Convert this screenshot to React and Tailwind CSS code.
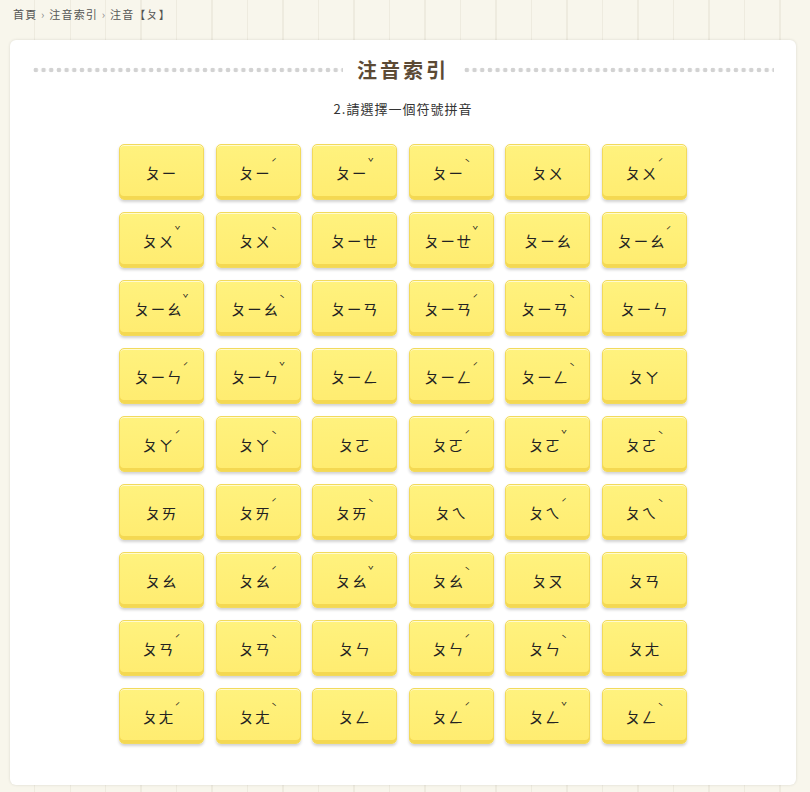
import React from "react"

// 注音【ㄆ】 syllable list, row by row (6 per row)
const rows = [
  ["ㄆㄧ", ""], ["ㄆㄧ", "ˊ"], ["ㄆㄧ", "ˇ"], ["ㄆㄧ", "ˋ"], ["ㄆㄨ", ""], ["ㄆㄨ", "ˊ"],
  ["ㄆㄨ", "ˇ"], ["ㄆㄨ", "ˋ"], ["ㄆㄧㄝ", ""], ["ㄆㄧㄝ", "ˇ"], ["ㄆㄧㄠ", ""], ["ㄆㄧㄠ", "ˊ"],
  ["ㄆㄧㄠ", "ˇ"], ["ㄆㄧㄠ", "ˋ"], ["ㄆㄧㄢ", ""], ["ㄆㄧㄢ", "ˊ"], ["ㄆㄧㄢ", "ˋ"], ["ㄆㄧㄣ", ""],
  ["ㄆㄧㄣ", "ˊ"], ["ㄆㄧㄣ", "ˇ"], ["ㄆㄧㄥ", ""], ["ㄆㄧㄥ", "ˊ"], ["ㄆㄧㄥ", "ˋ"], ["ㄆㄚ", ""],
  ["ㄆㄚ", "ˊ"], ["ㄆㄚ", "ˋ"], ["ㄆㄛ", ""], ["ㄆㄛ", "ˊ"], ["ㄆㄛ", "ˇ"], ["ㄆㄛ", "ˋ"],
  ["ㄆㄞ", ""], ["ㄆㄞ", "ˊ"], ["ㄆㄞ", "ˋ"], ["ㄆㄟ", ""], ["ㄆㄟ", "ˊ"], ["ㄆㄟ", "ˋ"],
  ["ㄆㄠ", ""], ["ㄆㄠ", "ˊ"], ["ㄆㄠ", "ˇ"], ["ㄆㄠ", "ˋ"], ["ㄆㄡ", ""], ["ㄆㄢ", ""],
  ["ㄆㄢ", "ˊ"], ["ㄆㄢ", "ˋ"], ["ㄆㄣ", ""], ["ㄆㄣ", "ˊ"], ["ㄆㄣ", "ˋ"], ["ㄆㄤ", ""],
  ["ㄆㄤ", "ˊ"], ["ㄆㄤ", "ˋ"], ["ㄆㄥ", ""], ["ㄆㄥ", "ˊ"], ["ㄆㄥ", "ˇ"], ["ㄆㄥ", "ˋ"],
]

const cjk = "font-['Noto_Sans_CJK_TC','Noto_Sans_CJK_SC',sans-serif]"

function Dots() {
  return (
    <div className="flex-1 h-[8px] bg-[radial-gradient(circle,#d2d2d2_2px,transparent_2.6px)] bg-[length:7.7px_8px] bg-repeat-x" />
  )
}

function Key({ body, tone }) {
  return (
    <a
      href="#"
      className="h-[56px] rounded-[5px] border border-[#f2da5c] bg-[linear-gradient(#fff27e,#ffec70)] shadow-[inset_0_1px_0_#fffbd0,inset_0_-3px_0_#f4d852,0_2px_3px_rgba(0,0,0,0.18)] flex items-center justify-center text-[#222]"
    >
      <span className="flex items-start whitespace-nowrap">
        <span className="text-[15px] leading-[15px] tracking-[1px]">{body}</span>
        {tone && (
          <span className="-mt-[7px] text-[10px] leading-[10px] w-[6px]">{tone}</span>
        )}
      </span>
    </a>
  )
}

export default function App() {
  return (
    <div
      className={`min-h-[792px] w-[810px] bg-[#f8f6ec] bg-[repeating-linear-gradient(90deg,transparent_0px,transparent_34px,#eeebdf_34px,#eeebdf_35.5px)] ${cjk} pb-[7px]`}
    >
      {/* breadcrumb */}
      <div className="h-[40px] pl-[13px] pt-[7px] text-[11px] text-[#555] leading-[14px] tracking-[1.2px]">
        首頁 <span className="text-[#888]">›</span> 注音索引 <span className="text-[#888]">›</span> 注音【ㄆ】
      </div>

      {/* main card */}
      <div className="ml-[10px] w-[786px] h-[745px] rounded-[6px] bg-white shadow-[0_0_3px_rgba(0,0,0,0.12)] px-[22px] pt-[16px]">
        <div className="flex items-center gap-[14px]">
          <Dots />
          <h1 className="text-[20px] font-bold text-[#5c4a35] tracking-[3px] leading-[28px]">注音索引</h1>
          <Dots />
        </div>
        <p className="mt-[16px] text-center text-[13px] text-[#333] tracking-[1px] leading-[18px]">2.請選擇一個符號拼音</p>

        <div className="mt-[26px] mx-auto w-[568px] grid grid-cols-6 gap-x-[11.6px] gap-y-[12px]">
          {rows.map(([b, t], i) => (
            <Key key={i} body={b} tone={t} />
          ))}
        </div>
      </div>
    </div>
  )
}
